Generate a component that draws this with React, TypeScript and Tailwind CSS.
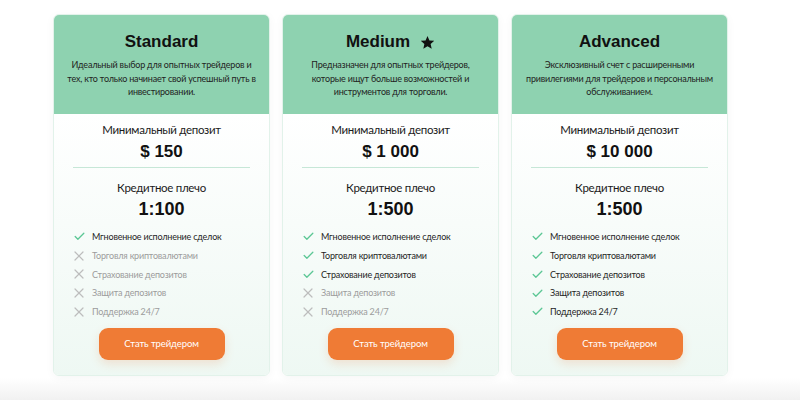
import { Check, X } from "lucide-react";

type Plan = {
  name: string;
  star?: boolean;
  desc: string[];
  deposit: string;
  leverage: string;
  enabled: number;
};

const features = [
  "Мгновенное исполнение сделок",
  "Торговля криптовалютами",
  "Страхование депозитов",
  "Защита депозитов",
  "Поддержка 24/7",
];

const plans: Plan[] = [
  {
    name: "Standard",
    desc: [
      "Идеальный выбор для опытных трейдеров и",
      "тех, кто только начинает свой успешный путь в",
      "инвестировании.",
    ],
    deposit: "$ 150",
    leverage: "1:100",
    enabled: 1,
  },
  {
    name: "Medium",
    star: true,
    desc: [
      "Предназначен для опытных трейдеров,",
      "которые ищут больше возможностей и",
      "инструментов для торговли.",
    ],
    deposit: "$ 1 000",
    leverage: "1:500",
    enabled: 3,
  },
  {
    name: "Advanced",
    desc: [
      "Эксклюзивный счет с расширенными",
      "привилегиями для трейдеров и персональным",
      "обслуживанием.",
    ],
    deposit: "$ 10 000",
    leverage: "1:500",
    enabled: 5,
  },
];

const Star = () => (
  <svg width="15" height="15" viewBox="0 0 24 24" className="ml-[10px] shrink-0">
    <path
      d="M12 1.5l3.1 7.1 7.7.7-5.8 5.1 1.7 7.6L12 18l-6.7 4 1.7-7.6-5.8-5.1 7.7-.7z"
      fill="#111"
    />
  </svg>
);

const PlanCard = ({ plan }: { plan: Plan }) => {
  return (
    <div className="w-[217px] rounded-[6px] overflow-hidden border border-[#e2f2ea] shadow-[0_2px_10px_rgba(0,0,0,0.04)] flex flex-col">
      {/* Header */}
      <div className="bg-[#8ed2b0] pt-[15px] pb-[15px] px-2 text-center">
        <div className="flex items-center justify-center h-[24px]">
          <h3 className="font-['Liberation_Sans',Arial,sans-serif] font-bold text-[17px] leading-[24px] text-[#111]">
            {plan.name}
          </h3>
          {plan.star && <Star />}
        </div>
        <p className="mt-[4px] font-['Lato',sans-serif] text-[9px] tracking-[-0.2px] leading-[13.5px] text-[#222]">
          {plan.desc.map((line, i) => (
            <span key={i} className="block whitespace-nowrap">
              {line}
            </span>
          ))}
        </p>
      </div>

      {/* Body */}
      <div className="flex-1 bg-[linear-gradient(to_bottom,#ffffff,#eef8f3)] pt-[8px] pb-[16px] flex flex-col items-center text-center">
        <div className="font-['Lato',sans-serif] text-[11.5px] tracking-[-0.3px] leading-[16px] text-[#1a1a1a]">
          Минимальный депозит
        </div>
        <div className="mt-[3px] font-['Liberation_Sans',Arial,sans-serif] font-bold text-[17px] leading-[22px] text-[#111]">
          {plan.deposit}
        </div>
        <div className="mt-[4px] h-px self-stretch mx-[19px] bg-[#c6e7d7]" />
        <div className="mt-[12px] font-['Lato',sans-serif] text-[11.5px] tracking-[-0.3px] leading-[16px] text-[#1a1a1a]">
          Кредитное плечо
        </div>
        <div className="mt-[2px] font-['Liberation_Sans',Arial,sans-serif] font-bold text-[18px] leading-[22px] text-[#111]">
          {plan.leverage}
        </div>

        <ul className="mt-[8px] self-stretch pl-[17px]">
          {features.map((f, i) => {
            const on = i < plan.enabled;
            return (
              <li key={f} className="flex items-center h-[18.75px] gap-[5px] font-['Lato',sans-serif] text-[9px] tracking-[-0.2px]">
                <span className="w-[16px] h-[16px] flex items-center justify-center">
                  {on ? (
                    <Check className="w-[13px] h-[13px] text-[#5cc795]" strokeWidth={2.4} />
                  ) : (
                    <X className="w-[16px] h-[16px] text-[#bdbdbd]" strokeWidth={1.8} />
                  )}
                </span>
                <span className={on ? "text-[#1f1f1f]" : "text-[#9c9c9c]"}>{f}</span>
              </li>
            );
          })}
        </ul>

        <button className="mt-[7px] w-[126px] h-[32px] rounded-[9px] bg-[#ef7b35] text-white font-['Lato',sans-serif] text-[9.5px] tracking-[-0.1px] shadow-[0_4px_10px_rgba(239,123,53,0.18)]">
          Стать трейдером
        </button>
      </div>
    </div>
  );
};

export default function App() {
  return (
    <div className="w-[800px] h-[400px] bg-[linear-gradient(to_bottom,#ffffff_378px,#f1f1f1_400px)] pt-[14px] pl-[53px]">
      <div className="flex gap-[12px] h-[362px]">
        {plans.map((p) => (
          <PlanCard key={p.name} plan={p} />
        ))}
      </div>
    </div>
  );
}
